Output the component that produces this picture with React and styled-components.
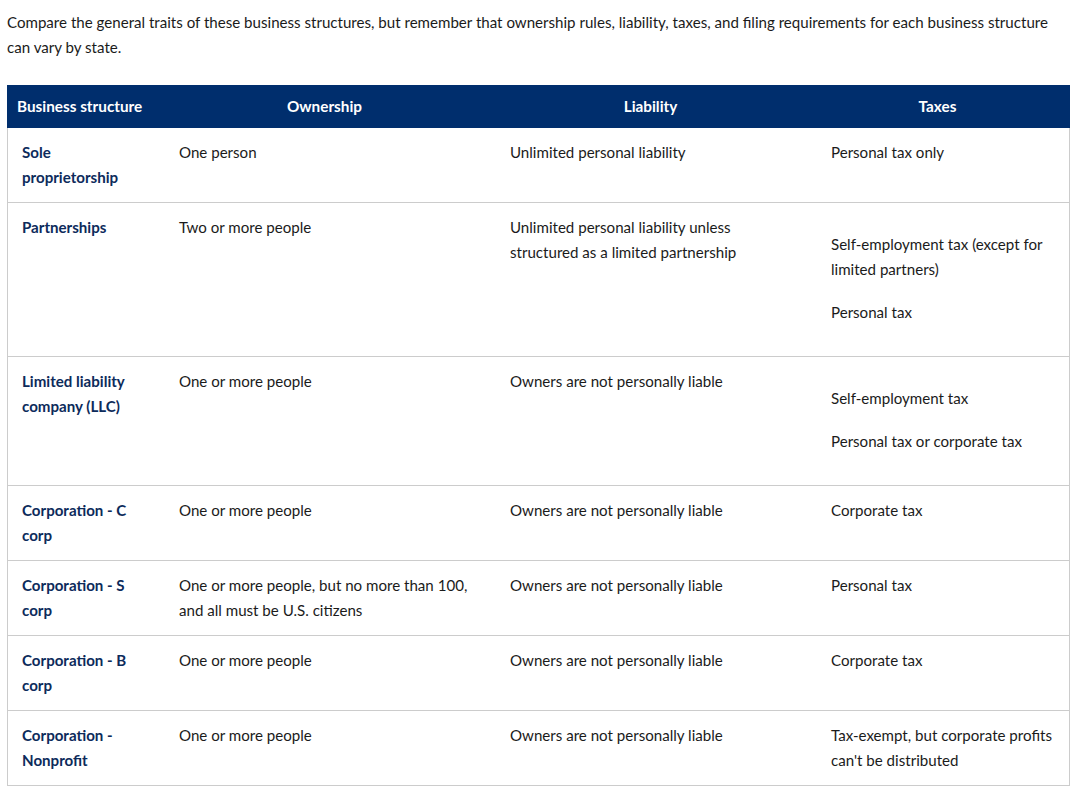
import React from 'react';
import styled, { createGlobalStyle } from 'styled-components';

// Data
const rows = [
  {
    name: 'Sole proprietorship',
    owners: 'One person',
    liability: 'Unlimited personal liability',
    taxes: ['Personal tax only'],
  },
  {
    name: 'Partnerships',
    owners: 'Two or more people',
    liability: 'Unlimited personal liability unless structured as a limited partnership',
    taxes: ['Self-employment tax (except for limited partners)', 'Personal tax'],
    split: true,
  },
  {
    name: 'Limited liability company (LLC)',
    owners: 'One or more people',
    liability: 'Owners are not personally liable',
    taxes: ['Self-employment tax', 'Personal tax or corporate tax'],
    split: true,
  },
  {
    name: 'Corporation - C corp',
    owners: 'One or more people',
    liability: 'Owners are not personally liable',
    taxes: ['Corporate tax'],
  },
  {
    name: 'Corporation - S corp',
    owners: 'One or more people, but no more than 100, and all must be U.S. citizens',
    liability: 'Owners are not personally liable',
    taxes: ['Personal tax'],
  },
  {
    name: 'Corporation - B corp',
    owners: 'One or more people',
    liability: 'Owners are not personally liable',
    taxes: ['Corporate tax'],
  },
  {
    name: 'Corporation - Nonprofit',
    owners: 'One or more people',
    liability: 'Owners are not personally liable',
    taxes: ["Tax-exempt, but corporate profits can't be distributed"],
  },
];

// Style
const GlobalStyle = createGlobalStyle`
  body {
    margin: 0;
    background: #fff;
    font-family: Lato, "Liberation Sans", sans-serif;
    font-size: 15.1px;
    line-height: 25px;
    color: #1b1b1b;
  }
`;

const Page = styled.div`
  padding: 10px 6px 0 7px;
`;

const Intro = styled.p`
  margin: 0 0 25px;
`;

const Table = styled.div`
  width: 1063px;
`;

const Row = styled.div`
  display: grid;
  grid-template-columns: 156px 331px 321px 1fr;
  border-left: 1px solid ${p => (p.$head ? '#002e6d' : '#cccccc')};
  border-right: 1px solid ${p => (p.$head ? '#002e6d' : '#cccccc')};
  border-bottom: ${p => (p.$head ? 'none' : '1px solid #cccccc')};
  background: ${p => (p.$head ? '#002e6d' : '#fff')};
`;

const HeadCell = styled.div`
  padding: 9px 20px 9px 10px;
  color: #fff;
  font-weight: 700;
  font-size: 15.3px;
  text-align: ${p => (p.$left ? 'left' : 'center')};
  &:first-child {
    padding-left: 9px;
  }
`;

const Cell = styled.div`
  padding: 12px 15px;
  &:first-child {
    padding-left: 14px;
  }
`;

const NameCell = styled(Cell)`
  font-weight: 700;
  color: #0d2b5b;
`;

const TaxLine = styled.p`
  margin: ${p => (p.$split ? '17px 0 18px' : '0')};
  &:last-child {
    margin-bottom: ${p => (p.$split ? '19px' : '0')};
  }
`;

const App = () => (
  <Page>
    <GlobalStyle />
    <Intro>
      Compare the general traits of these business structures, but remember that ownership rules,
      liability, taxes, and filing requirements for each business structure can vary by state.
    </Intro>
    <Table>
      <Row $head>
        <HeadCell $left>Business structure</HeadCell>
        <HeadCell>Ownership</HeadCell>
        <HeadCell>Liability</HeadCell>
        <HeadCell>Taxes</HeadCell>
      </Row>
      {rows.map(r => (
        <Row key={r.name}>
          <NameCell>{r.name}</NameCell>
          <Cell>{r.owners}</Cell>
          <Cell>{r.liability}</Cell>
          <Cell>
            {r.taxes.map(t => (
              <TaxLine key={t} $split={r.split}>
                {t}
              </TaxLine>
            ))}
          </Cell>
        </Row>
      ))}
    </Table>
  </Page>
);

export default App;
